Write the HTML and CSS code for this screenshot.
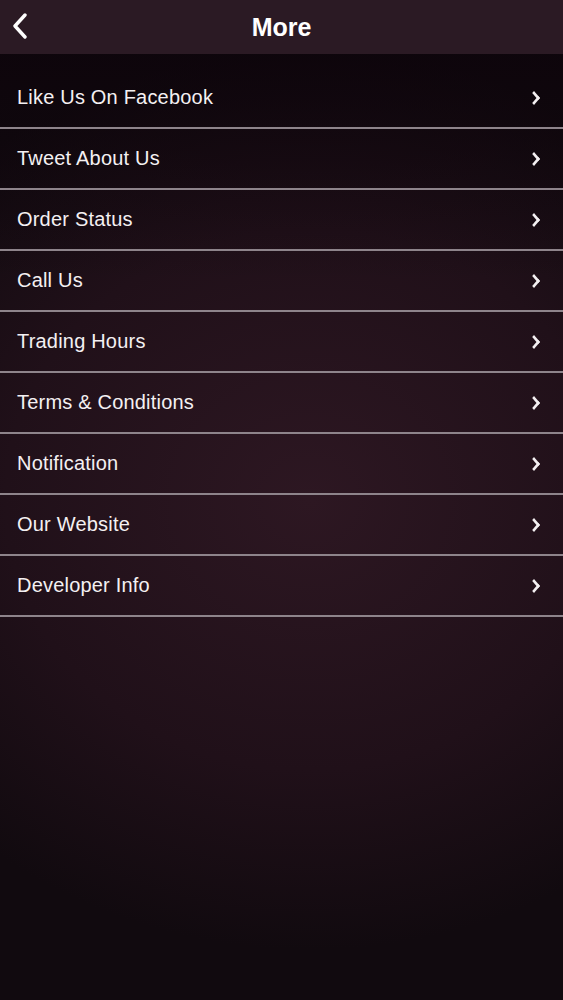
FILE: index.html
```html
<!DOCTYPE html>
<html lang="en">

<head>
    <meta charset="UTF-8">
    <meta name="viewport" content="width=device-width, initial-scale=1.0">
    <title>More</title>
    <link rel="stylesheet" href="styles.css">
</head>

<body>
    <div class="topbar">
        <span class="back">
            <svg width="18" height="26" viewBox="0 0 18 26">
                <polyline points="14,2 4,13 14,24" fill="none" stroke="#fff" stroke-width="3.4" stroke-linecap="round" stroke-linejoin="round" />
            </svg>
        </span>
        <h1>More</h1>
    </div>

    <ul class="menu">
        <li>Like Us On Facebook <span class="arrow"></span></li>
        <li>Tweet About Us <span class="arrow"></span></li>
        <li>Order Status <span class="arrow"></span></li>
        <li>Call Us <span class="arrow"></span></li>
        <li>Trading Hours <span class="arrow"></span></li>
        <li>Terms &amp; Conditions <span class="arrow"></span></li>
        <li>Notification <span class="arrow"></span></li>
        <li>Our Website <span class="arrow"></span></li>
        <li>Developer Info <span class="arrow"></span></li>
    </ul>
</body>

</html>
```

FILE: styles.css
```css
html, body {
    height: 100%;
    margin: 0;
    padding: 0;
}

body {
    font-family: "Liberation Sans", Arial, sans-serif;
    color: #f4f0f2;
    background-color: #170c13;
    background-image:
        linear-gradient(to bottom, rgba(12, 3, 10, 0.85) 0, rgba(12, 3, 10, 0) 280px),
        radial-gradient(ellipse 90% 45% at 55% 50%, #2d1722 0%, #201019 60%, #110a0f 100%);
    min-height: 1000px;
}

.topbar {
    position: relative;
    height: 54px;
    background-color: #2b1a24;
    display: flex;
    align-items: center;
    justify-content: center;
}

.topbar h1 {
    margin: 0;
    font-size: 25px;
    font-weight: bold;
    color: #fff;
}

/* back arrow sits over the title bar */
.back {
    position: absolute;
    left: 11px;
    top: 13px;
    display: block;
    width: 18px;
    height: 26px;
}

.back svg {
    display: block;
}

.menu {
    list-style: none;
    margin: 0;
    padding: 14px 0 0 0;
}

.menu li {
    height: 59px;
    border-bottom: 2px solid #8e848b;
    display: flex;
    align-items: center;
    justify-content: space-between;
    padding: 0 24px 0 17px;
    font-size: 20px;
    letter-spacing: 0.2px;
}

.arrow {
    width: 7px;
    height: 7px;
    border-top: 3px solid #f4f0f2;
    border-right: 3px solid #f4f0f2;
    transform: scaleX(0.85) rotate(45deg);
    margin-top: 1px;
}
```
